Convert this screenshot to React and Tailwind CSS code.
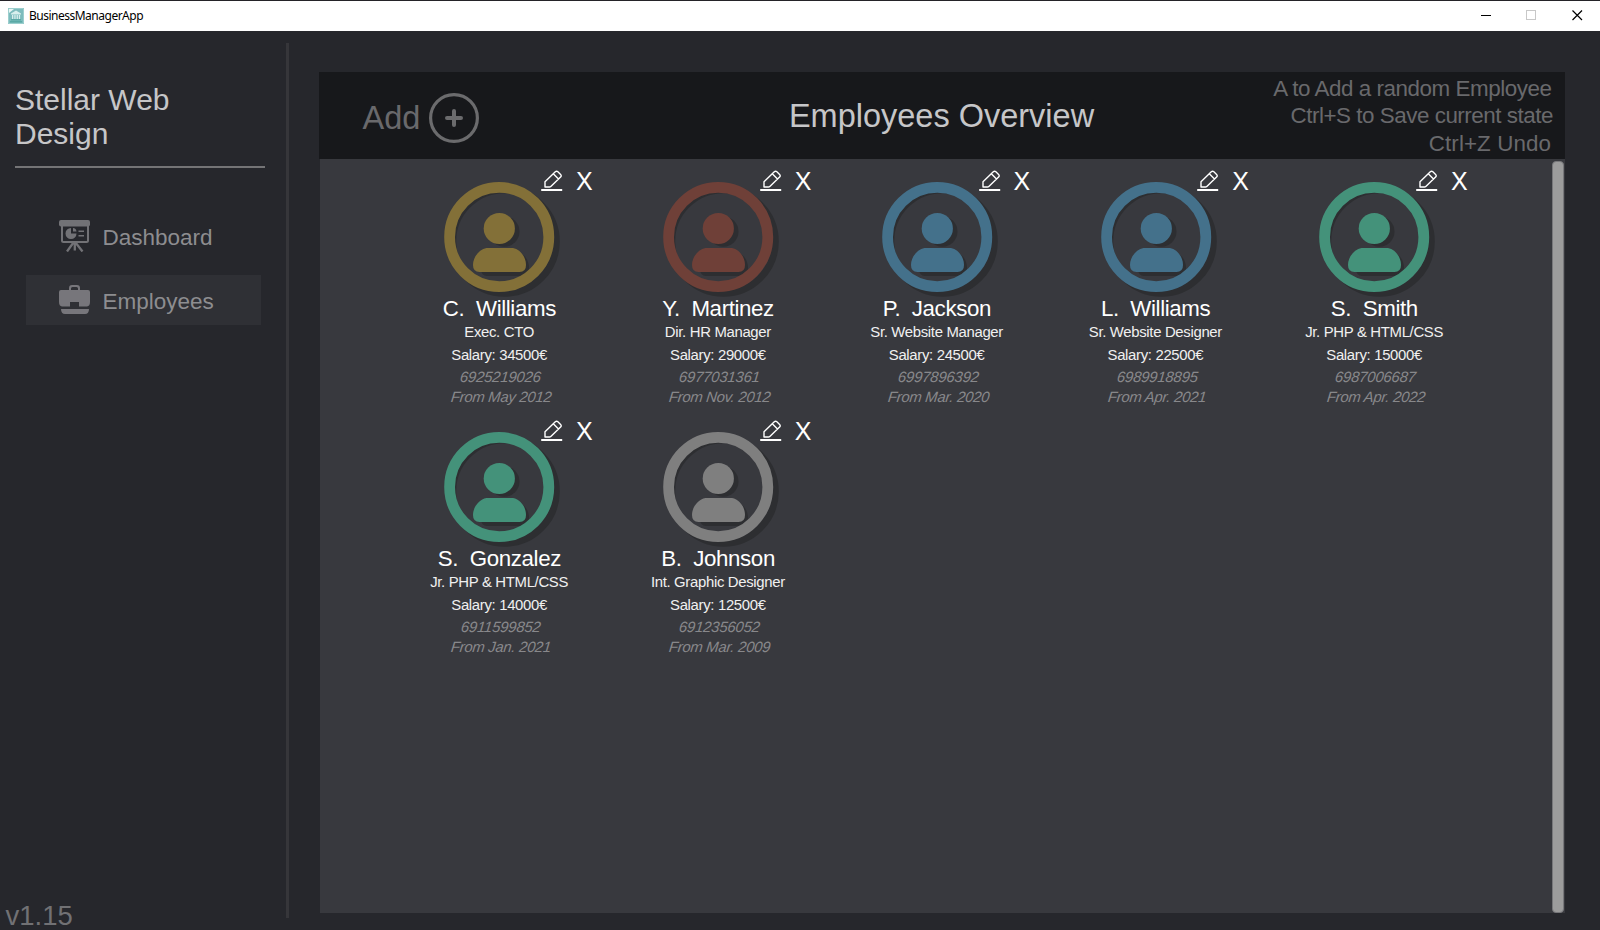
const employees = [
  { name: "C.  Williams", role: "Exec. CTO", salary: 34500, phone: "6925219026", from: "May 2012", color: "text-[#837038]" },
  { name: "Y.  Martinez", role: "Dir. HR Manager", salary: 29000, phone: "6977031361", from: "Nov. 2012", color: "text-[#6f4038]" },
  { name: "P.  Jackson", role: "Sr. Website Manager", salary: 24500, phone: "6997896392", from: "Mar. 2020", color: "text-[#44718b]" },
  { name: "L.  Williams", role: "Sr. Website Designer", salary: 22500, phone: "6989918895", from: "Apr. 2021", color: "text-[#44718b]" },
  { name: "S.  Smith", role: "Jr. PHP & HTML/CSS", salary: 15000, phone: "6987006687", from: "Apr. 2022", color: "text-[#44927a]" },
  { name: "S.  Gonzalez", role: "Jr. PHP & HTML/CSS", salary: 14000, phone: "6911599852", from: "Jan. 2021", color: "text-[#44927a]" },
  { name: "B.  Johnson", role: "Int. Graphic Designer", salary: 12500, phone: "6912356052", from: "Mar. 2009", color: "text-[#7f7f7f]" },
];

function Avatar({ color }) {
  return (
    <svg className={`block h-[113px] w-[110px] overflow-visible ${color}`} viewBox="0 0 110 113">
      <g fill="#2d2e31">
        <circle cx="60.500" cy="59.500" r="51.800" fill="none" stroke="#2d2e31" strokeWidth="7" />
        <circle cx="60.300" cy="49.600" r="15.200" />
        <path d="M46 70h27c7 1.500 12 8 12 16q0 8-6 8H43q-6 0-6-8z" />
      </g>
      <circle cx="55.200" cy="55" r="49.600" fill="none" stroke="currentColor" strokeWidth="10.800" />
      <circle cx="55.300" cy="46.500" r="15.600" fill="currentColor" />
      <path d="M42.500 66h26.500c7.500 1.500 13 9 13 17q0 7-6.500 7H35.500q-6.500 0-6.500-7C29 75 35 67.500 42.500 66Z" fill="currentColor" />
    </svg>
  );
}

function PenIcon() {
  return (
    <svg className="h-[22px] w-[22px]" viewBox="0 0 22 22" fill="none" stroke="#fff">
      <path d="M.2 20h21" strokeWidth="2" />
      <path d="M4 17v-5.200L14.300 1.800q1.300-1.200 2.600 0l2.700 2.600q1.200 1.300 0 2.700L9.800 16.400q-.6.600-1.400.6z M12.300 3.800l5.200 5.200" strokeWidth="1.400" strokeLinejoin="round" />
    </svg>
  );
}

function EmployeeCard({ employee }) {
  return (
    <article className="relative flex h-[250px] flex-col items-center whitespace-pre pt-[17px] text-[14.9px] leading-[23px] tracking-[-0.32px] text-[#f0f0f0]">
      <Avatar color={employee.color} />
      <h2 className="mt-px mb-[-1px] text-[22.3px] leading-[26px] tracking-[-0.38px] text-white">{employee.name}</h2>
      <p className="pr-[0.5px]">{employee.role}</p>
      <p className="pr-[0.5px]">Salary: {employee.salary}€</p>
      <p className="-skew-x-6 pl-[3px] leading-[20px] italic tracking-[-0.2px] text-[#88888b]">{employee.phone}</p>
      <p className="-skew-x-6 pl-[3px] leading-[20px] italic tracking-[-0.3px] text-[#88888b]">From {employee.from}</p>
      <div className="absolute top-[5px] left-[151px] flex gap-[13px]">
        <PenIcon />
        <span className="text-[25px] leading-[22px] tracking-normal text-white">X</span>
      </div>
    </article>
  );
}

function AppLogo() {
  return (
    <svg className="h-4 w-4" viewBox="0 0 16 16">
      <path fill="#7dbcbd" d="M0 0h16v16H0z" />
      <path fill="#eaf6f5" d="M1 1h5L1 5z" />
      <path fill="#d8efed" d="M3 5.500 8 2.500l5 3v1H3zM4 7h1.300v4H4zM6.300 7h1.300v4H6.300zM8.600 7h1.300v4H8.600zM10.800 7h1.300v4h-1.300z" />
      <path fill="#5aa9a5" d="M3 11h10v1.500H3zM2 13h12v1.500H2z" />
      <path fill="none" stroke="#9ccfce" d="M.5.500h15v15H.5z" />
    </svg>
  );
}

function TitleBar() {
  return (
    <header className="flex h-[31px] items-center border-t border-[#242328] bg-white pr-[17px] pb-px pl-2">
      <AppLogo />
      <span className="ml-[5px] grow font-['Noto_Sans','Open_Sans',sans-serif] text-[12px] tracking-[-0.5px] text-black">BusinessManagerApp</span>
      <svg className="h-[11px] w-[102px]" viewBox="0 0 102 11" fill="none" shapeRendering="crispEdges">
        <path d="M0 5.500h10" stroke="#000" />
        <path d="M45.500.5h9v9h-9z" stroke="#c8c8c8" />
        <path d="M91.500.5l9.500 9.500M101 .5l-9.500 9.500" stroke="#000" strokeWidth="1.200" shapeRendering="auto" />
      </svg>
    </header>
  );
}

function BoardIcon() {
  return (
    <svg className="mt-[3px] h-8 w-[31px]" viewBox="0 0 31 32" fill="none" stroke="#727276" strokeWidth="2">
      <rect x="0" y="0" width="31" height="6.500" rx="2" fill="#727276" stroke="none" />
      <path d="M3 6v14.500q0 1.500 1.500 1.500h23q1.500 0 1.500-1.500V6" />
      <path d="M14.500 22.500l-6.500 9M16.500 22.500l7 9M15.800 22v8.500" strokeWidth="2.300" />
      <path d="M12 8v5.500h5.500A5.500 5.500 0 1 1 12 8z" fill="#727276" stroke="none" />
      <path d="M14 8a4 4 0 0 1 3.500 3.500H14z" fill="#727276" stroke="none" />
      <path d="M19.500 11.200h5.500M19.500 15.800h5.500" strokeWidth="1.600" />
    </svg>
  );
}

function BriefcaseIcon() {
  return (
    <svg className="mt-px h-[29px] w-[31px]" viewBox="0 0 31 29" fill="#77767b">
      <path d="M10 5V3q0-3 3-3h5q3 0 3 3v2h-2V3.500q0-1.500-1.500-1.500h-4Q12 2 12 3.500V5z" />
      <path d="M2 5h27q2 0 2 2v10q0 4-3 4.500h-8V17h-9v4.500H3Q0 21 0 17V7q0-2 2-2z" />
      <path d="M2 24h28q0 5-4 5H6q-4 0-4-5z" />
    </svg>
  );
}

function NavItem({ icon, label, active }) {
  return (
    <a className={`flex h-[50px] items-center gap-[12.5px] pl-[33px] text-[22.5px] text-[#8d8d90] ${active ? "bg-[#2f3035]" : ""}`}>
      <span className="-mt-[3px]">{icon}</span>
      <span className="mt-[3px]">{label}</span>
    </a>
  );
}

function Sidebar() {
  return (
    <aside className="flex w-[286px] shrink-0 flex-col">
      <div className="mt-[51px] ml-[15px] h-[86px] w-[250px] border-b-2 border-[#747476] pt-px text-[30px] leading-[34px] text-[#c6c6c8]">
        Stellar Web
        <br />
        Design
      </div>
      <nav className="mt-[43px] ml-[26px] flex w-[235px] flex-col gap-[14px]">
        <NavItem icon={<BoardIcon />} label="Dashboard" />
        <NavItem icon={<BriefcaseIcon />} label="Employees" active />
      </nav>
      <p className="mt-auto mb-[-1px] ml-[5.5px] text-[27.5px] leading-[30px] text-[#717174]">v1.15</p>
    </aside>
  );
}

export default function App() {
  return (
    <div className="flex h-[930px] w-[1600px] flex-col overflow-hidden bg-[#26272c] font-['Liberation_Sans',Arial,sans-serif]">
      <TitleBar />
      <div className="flex min-h-0 grow">
        <Sidebar />
        <div className="mt-3 h-[875px] w-[3px] shrink-0 bg-[#36363a]" />
        <main className="mt-[41px] ml-[30px] flex h-[841px] w-[1246px] flex-col">
          <div className="grid h-[87px] shrink-0 grid-cols-[400px_446px_400px] bg-[#17181b]">
            <button className="flex items-center pl-[43.500px] text-left text-[32.5px] text-[#69696c]">
              <span className="w-[66.500px] pt-[6px]">Add</span>
              <svg className="mt-[5px] h-[50px] w-[50px]" viewBox="0 0 50 50" fill="none" stroke="#6b6b6d">
                <circle cx="25" cy="25" r="23.400" strokeWidth="3.200" />
                <path d="M25 18v14M18 25h14" strokeWidth="4" strokeLinecap="round" />
              </svg>
            </button>
            <h1 className="pt-[25px] pr-px text-center text-[32.5px] leading-[38px] text-[#c6c6c8]">Employees Overview</h1>
            <div className="pt-[3px] pr-[12px] text-right text-[22.4px] leading-[27.3px] whitespace-nowrap text-[#69696c]">
              <p className="pr-[1.5px] tracking-[-0.45px]">A to Add a random Employee</p>
              <p className="tracking-[-0.47px]">Ctrl+S to Save current state</p>
              <p className="pr-[2px] tracking-[0.08px]">Ctrl+Z Undo</p>
            </div>
          </div>
          <section className="ml-px flex min-h-0 grow bg-[#38393e]">
            <div className="grid w-[1232px] shrink-0 auto-rows-[250px] grid-cols-[repeat(5,218.75px)] pt-[6px] pl-[70px]">
              {employees.map((employee) => (
                <EmployeeCard key={employee.name} employee={employee} />
              ))}
            </div>
            <div className="mt-[2px] h-[752px] w-[12px] rounded-[4px] border border-[#77777a] bg-[#9c9c9c]" />
          </section>
        </main>
      </div>
    </div>
  );
}
